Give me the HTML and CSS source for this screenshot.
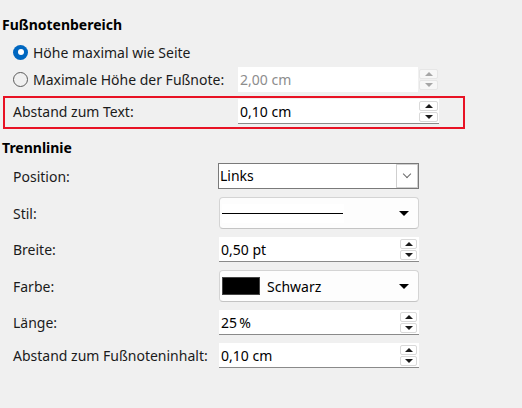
FILE: index.html
```html
<html>
<head>
<title>Fußnote</title>
<meta charset='utf-8'/>
<link rel="stylesheet" href="styles.css">
</head>
<body>
<div class='panel'>
<div class='heading'>Fußnotenbereich</div>
<div class='opt first'>
<span class='radio on'></span><span>Höhe maximal wie Seite</span>
</div>
<div class='opt line'>
<div class='lead'><span class='radio'></span><span>Maximale Höhe der Fußnote:</span></div>
<div class='spin big off'>
<span class='val'>2,00 cm</span>
<span class='arrows'><i class='up'></i><i class='down'></i></span>
</div>
</div>
<div class='mark'>
<span class='lead'>Abstand zum Text:</span>
<div class='spin big'>
<span class='val'>0,10 cm</span>
<span class='arrows'><i class='up'></i><i class='down'></i></span>
</div>
</div>
<div class='heading second'>Trennlinie</div>
<div class='rows'>
<div class='row'>
<span class='lbl'>Position:</span>
<div class='select'><span class='val'>Links</span><span class='drop'><i></i></span></div>
</div>
<div class='row'>
<span class='lbl'>Stil:</span>
<div class='combo'><span class='preview'><b></b></span><i class='tri'></i></div>
</div>
<div class='row'>
<span class='lbl'>Breite:</span>
<div class='spin'>
<span class='val'>0,50 pt</span>
<span class='arrows'><i class='up'></i><i class='down'></i></span>
</div>
</div>
<div class='row'>
<span class='lbl'>Farbe:</span>
<div class='combo'><span class='swatch'></span><span class='cname'>Schwarz</span><i class='tri'></i></div>
</div>
<div class='row'>
<span class='lbl'>Länge:</span>
<div class='spin'>
<span class='val'>25&#8239;%</span>
<span class='arrows'><i class='up'></i><i class='down'></i></span>
</div>
</div>
<div class='row'>
<span class='lbl'>Abstand zum Fußnoteninhalt:</span>
<div class='spin'>
<span class='val'>0,10 cm</span>
<span class='arrows'><i class='up'></i><i class='down'></i></span>
</div>
</div>
</div>
</div>
</body>
</html>
```

FILE: styles.css
```css
body {
	margin: 0;
	background: #f0f0f0;
	font: 14px "Noto Sans", sans-serif;
	color: #1b1b1b;
}
.panel {
	width: 522px;
	height: 408px;
	padding-top: 15px;
	box-sizing: border-box;
}
.heading {
	font-weight: bold;
	line-height: 20px;
	padding-left: 2px;
	color: #000;
}
.heading.second {
	margin-top: 9px;
}
.opt {
	display: flex;
	align-items: center;
	padding-left: 13px;
}
.opt.first {
	height: 24px;
	margin-top: 5px;
}
.opt.line {
	margin-top: 3px;
}
.lead {
	display: flex;
	align-items: center;
	width: 225px;
	flex: none;
}
.radio {
	width: 15px;
	height: 15px;
	box-sizing: border-box;
	border-radius: 50%;
	border: 1px solid #5c5c5c;
	margin-right: 5px;
	flex: none;
}
.radio.on {
	border: none;
	background: #0067c0;
	display: flex;
	align-items: center;
	justify-content: center;
}
.radio.on::after {
	content: '';
	width: 6px;
	height: 6px;
	border-radius: 50%;
	background: #fff;
}
.mark {
	display: flex;
	align-items: center;
	margin: 4px 0 0 3px;
	width: 462px;
	box-sizing: border-box;
	border: 2px solid #e81224;
	padding: 1px 0 3px 8px;
}

/* spin fields */
.spin {
	display: flex;
	align-items: center;
	width: 200px;
	height: 25px;
	box-sizing: border-box;
	background: #fff;
	border-bottom: 1px solid #8a8a8a;
	padding-right: 2px;
	color: #000;
}
.spin.big {
	width: 201px;
	padding-right: 1px;
}
.spin.off {
	border-bottom: none;
	background: linear-gradient(to right, #fff 180px, #f0f0f0 180px);
	color: #8d8d8d;
}
.spin .val {
	flex: 1;
	padding-left: 2px;
}
.arrows {
	display: flex;
	flex-direction: column;
	gap: 1px;
	width: 17px;
	height: 21px;
	flex: none;
}
.spin.big .arrows {
	width: 19px;
}
.arrows i {
	flex: 1;
	display: flex;
	align-items: center;
	justify-content: center;
	background: #fff;
	border: 1px solid #d9d9d9;
	border-radius: 2px;
}
.spin.off .arrows i {
	background: #f7f7f7;
	border-color: #e6e6e6;
}
.arrows i::after {
	content: '';
	border-left: 4px solid transparent;
	border-right: 4px solid transparent;
}
.arrows .up::after {
	border-bottom: 4px solid #1b1b1b;
}
.arrows .down::after {
	border-top: 4px solid #1b1b1b;
}
.spin.off .arrows .up::after {
	border-bottom-color: #a6a6a6;
}
.spin.off .arrows .down::after {
	border-top-color: #a6a6a6;
}

/* separator rows */
.rows {
	display: flex;
	flex-direction: column;
	gap: 8px;
	margin-top: 5px;
}
.row {
	display: flex;
	align-items: center;
	padding-left: 13px;
}
.lbl {
	width: 206px;
	flex: none;
}
.select {
	display: flex;
	width: 201px;
	height: 26px;
	margin-left: -1px;
	box-sizing: border-box;
	border: 1px solid #7a7a7a;
	background: #fff;
	color: #000;
}
.select .val {
	flex: 1;
	padding-left: 1px;
	line-height: 24px;
}
.drop {
	width: 20px;
	border: 1px solid #cfcfcf;
	display: flex;
	align-items: center;
	justify-content: center;
}
.drop i {
	width: 5px;
	height: 5px;
	border-right: 1px solid #6b6b6b;
	border-bottom: 1px solid #6b6b6b;
	transform: translateY(-2px) rotate(45deg);
}
.combo {
	display: flex;
	align-items: center;
	width: 200px;
	height: 32px;
	box-sizing: border-box;
	border: 1px solid #d4d4d4;
	border-bottom-color: #c4c4c4;
	border-radius: 4px;
	background: #fdfdfd;
	padding: 0 9px 0 2px;
	color: #000;
}
.preview {
	display: flex;
	align-items: center;
	width: 122px;
	height: 19px;
	background: #fff;
}
.preview b {
	width: 121px;
	height: 1px;
	background: #000;
}
.tri {
	margin-left: auto;
	border-left: 5px solid transparent;
	border-right: 5px solid transparent;
	border-top: 5px solid #000;
}
.swatch {
	width: 38px;
	height: 18px;
	box-sizing: border-box;
	background: #000;
	border: 1px solid #444;
}
.cname {
	margin-left: 7px;
}
```
